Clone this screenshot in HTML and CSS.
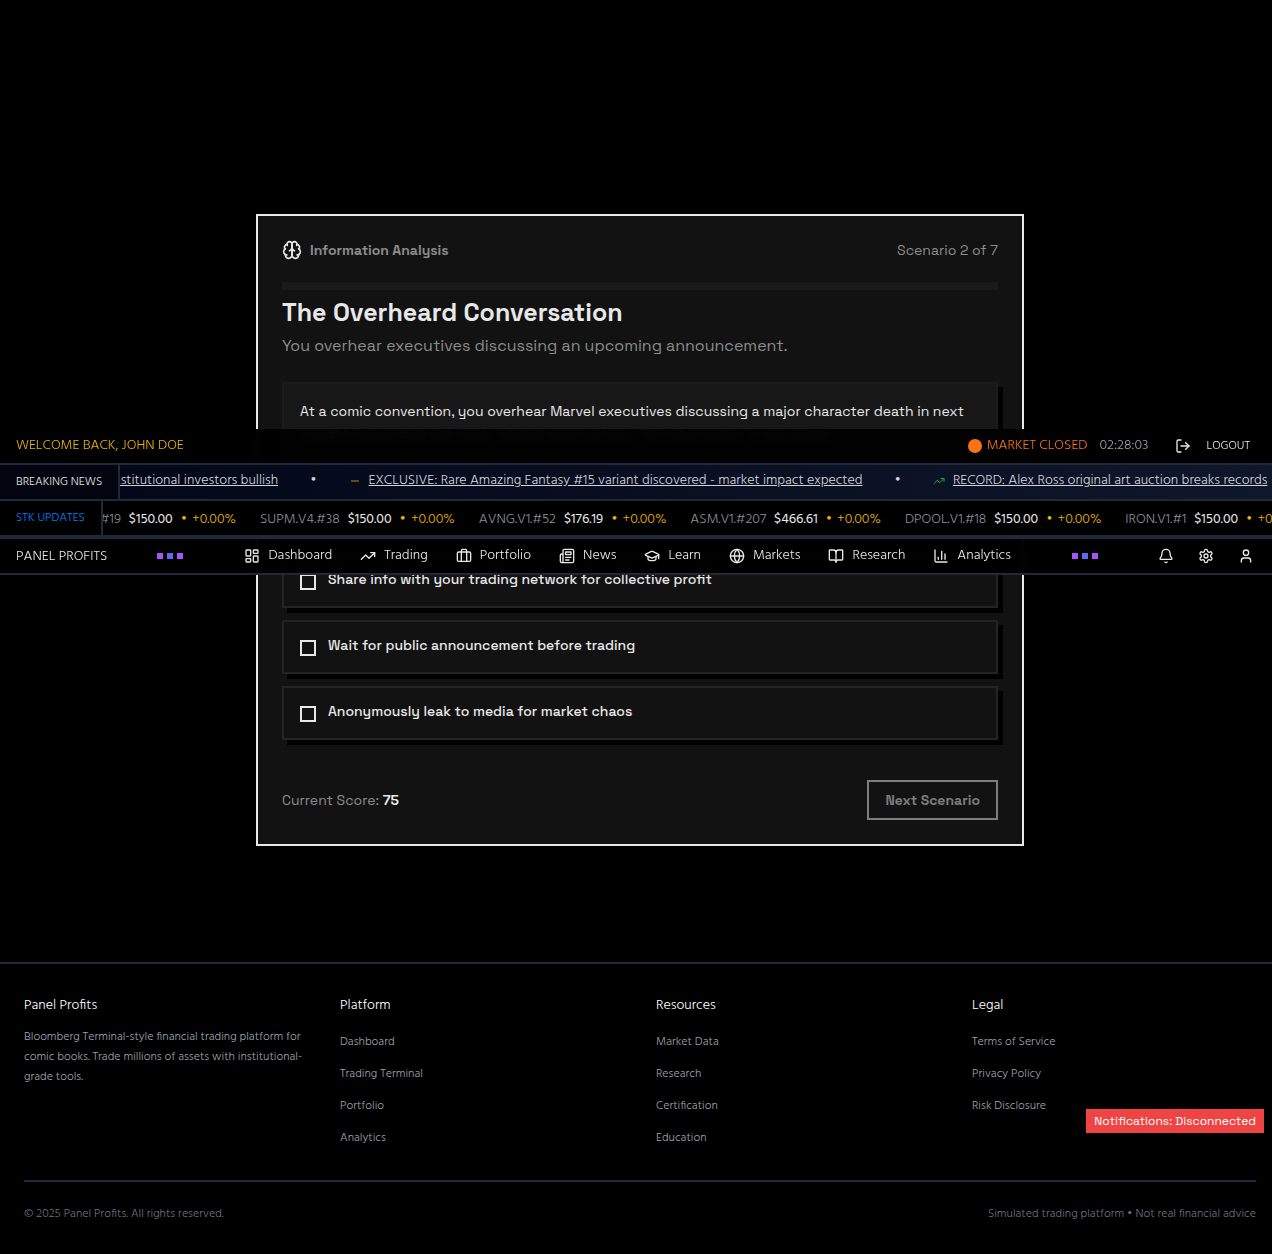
FILE: index.html
```html
<!DOCTYPE html>
<html lang="en">
<head>
<meta charset="utf-8">
<meta name="viewport" content="width=device-width, initial-scale=1">
<title>Panel Profits</title>
<link rel="stylesheet" href="styles.css">
</head>
<body>
<svg class="sprite" aria-hidden="true">
  <symbol id="i-logout" viewBox="0 0 24 24"><path d="M9 21H5a2 2 0 0 1-2-2V5a2 2 0 0 1 2-2h4"/><path d="m16 17 5-5-5-5"/><path d="M21 12H9"/></symbol>
  <symbol id="i-trend" viewBox="0 0 24 24"><path d="m22 7-8.500 8.500-5-5L2 17"/><path d="M16 7h6v6"/></symbol>
  <symbol id="i-minus" viewBox="0 0 24 24"><path d="M5 12h14"/></symbol>
  <symbol id="i-dashboard" viewBox="0 0 24 24"><rect width="7" height="9" x="3" y="3" rx="1"/><rect width="7" height="5" x="14" y="3" rx="1"/><rect width="7" height="9" x="14" y="12" rx="1"/><rect width="7" height="5" x="3" y="16" rx="1"/></symbol>
  <symbol id="i-briefcase" viewBox="0 0 24 24"><rect width="20" height="14" x="2" y="6" rx="2"/><path d="M16 20V4a2 2 0 0 0-2-2h-4a2 2 0 0 0-2 2v16"/></symbol>
  <symbol id="i-news" viewBox="0 0 24 24"><path d="M4 22h16a2 2 0 0 0 2-2V4a2 2 0 0 0-2-2H8a2 2 0 0 0-2 2v16a2 2 0 0 1-2 2Zm0 0a2 2 0 0 1-2-2v-9c0-1.100.9-2 2-2h2"/><path d="M18 14h-8"/><path d="M15 18h-5"/><path d="M10 6h8v4h-8V6Z"/></symbol>
  <symbol id="i-learn" viewBox="0 0 24 24"><path d="M21.420 10.922a1 1 0 0 0-.019-1.838L12.830 5.180a2 2 0 0 0-1.660 0L2.600 9.080a1 1 0 0 0 0 1.832l8.570 3.908a2 2 0 0 0 1.660 0z"/><path d="M22 10v6"/><path d="M6 12.500V16a6 3 0 0 0 12 0v-3.500"/></symbol>
  <symbol id="i-globe" viewBox="0 0 24 24"><circle cx="12" cy="12" r="10"/><path d="M12 2a14.500 14.500 0 0 0 0 20 14.500 14.500 0 0 0 0-20"/><path d="M2 12h20"/></symbol>
  <symbol id="i-book" viewBox="0 0 24 24"><path d="M12 7v14"/><path d="M3 18a1 1 0 0 1-1-1V4a1 1 0 0 1 1-1h5a4 4 0 0 1 4 4 4 4 0 0 1 4-4h5a1 1 0 0 1 1 1v13a1 1 0 0 1-1 1h-6a3 3 0 0 0-3 3 3 3 0 0 0-3-3z"/></symbol>
  <symbol id="i-chart" viewBox="0 0 24 24"><path d="M3 3v16a2 2 0 0 0 2 2h16"/><path d="M18 17V9"/><path d="M13 17V5"/><path d="M8 17v-3"/></symbol>
  <symbol id="i-bell" viewBox="0 0 24 24"><path d="M10.268 21a2 2 0 0 0 3.464 0"/><path d="M3.262 15.326A1 1 0 0 0 4 17h16a1 1 0 0 0 .740-1.673C19.410 13.956 18 12.499 18 8A6 6 0 0 0 6 8c0 4.499-1.411 5.956-2.738 7.326"/></symbol>
  <symbol id="i-gear" viewBox="0 0 24 24"><path d="M12.220 2h-.44a2 2 0 0 0-2 2v.18a2 2 0 0 1-1 1.730l-.43.25a2 2 0 0 1-2 0l-.15-.08a2 2 0 0 0-2.730.73l-.22.38a2 2 0 0 0 .73 2.730l.15.1a2 2 0 0 1 1 1.720v.51a2 2 0 0 1-1 1.740l-.15.09a2 2 0 0 0-.73 2.730l.22.38a2 2 0 0 0 2.730.73l.15-.08a2 2 0 0 1 2 0l.43.25a2 2 0 0 1 1 1.730V20a2 2 0 0 0 2 2h.44a2 2 0 0 0 2-2v-.18a2 2 0 0 1 1-1.730l.43-.25a2 2 0 0 1 2 0l.15.08a2 2 0 0 0 2.730-.73l.22-.39a2 2 0 0 0-.73-2.730l-.15-.08a2 2 0 0 1-1-1.740v-.5a2 2 0 0 1 1-1.740l.15-.09a2 2 0 0 0 .73-2.730l-.22-.38a2 2 0 0 0-2.730-.73l-.15.08a2 2 0 0 1-2 0l-.43-.25a2 2 0 0 1-1-1.730V4a2 2 0 0 0-2-2z"/><circle cx="12" cy="12" r="3"/></symbol>
  <symbol id="i-user" viewBox="0 0 24 24"><path d="M19 21v-2a4 4 0 0 0-4-4H9a4 4 0 0 0-4 4v2"/><circle cx="12" cy="7" r="4"/></symbol>
  <symbol id="i-brain" viewBox="0 0 24 24"><path d="M12 5a3 3 0 1 0-5.997.125 4 4 0 0 0-2.526 5.770 4 4 0 0 0 .556 6.588A4 4 0 1 0 12 18Z"/><path d="M12 5a3 3 0 1 1 5.997.125 4 4 0 0 1 2.526 5.770 4 4 0 0 1-.556 6.588A4 4 0 1 1 12 18Z"/><path d="M15 13a4.500 4.500 0 0 1-3-4 4.500 4.500 0 0 1-3 4"/><path d="M17.599 6.500a3 3 0 0 0 .399-1.375"/><path d="M6.003 5.125A3 3 0 0 0 6.401 6.500"/><path d="M3.477 10.896a4 4 0 0 1 .585-.396"/><path d="M19.938 10.500a4 4 0 0 1 .585.396"/><path d="M6 18a4 4 0 0 1-1.967-.516"/><path d="M19.967 17.484A4 4 0 0 1 18 18"/></symbol>
</svg>

<header class="site-header">
  <div class="topbar">
    <span class="welcome">WELCOME BACK, JOHN DOE</span>
    <div class="status">
      <span class="status-dot"></span>
      <span class="market">MARKET CLOSED</span>
      <time class="clock">02:28:03</time>
      <button class="logout" type="button"><svg class="icon"><use href="#i-logout"/></svg>LOGOUT</button>
    </div>
  </div>

  <div class="ticker news">
    <span class="ticker-label news-label">BREAKING NEWS</span>
    <div class="ticker-view news-view">
      <div class="news-lead"><a href="#">Institutional investors bullish</a></div>
      <span>•</span>
      <div class="news-item"><svg class="icon-small flat"><use href="#i-minus"/></svg><a href="#">EXCLUSIVE: Rare Amazing Fantasy #15 variant discovered - market impact expected</a></div>
      <span>•</span>
      <div class="news-item"><svg class="icon-small up"><use href="#i-trend"/></svg><a href="#">RECORD: Alex Ross original art auction breaks records</a></div>
    </div>
  </div>

  <div class="ticker stocks">
    <span class="ticker-label stocks-label">STK UPDATES</span>
    <div class="ticker-view stocks-view">
      <div class="quote"><span class="symbol symbol-lead">#19</span><b>$150.00</b><span class="change"><i>•</i><em>+0.00%</em></span></div>
      <div class="quote"><span class="symbol">SUPM.V4.#38</span><b>$150.00</b><span class="change"><i>•</i><em>+0.00%</em></span></div>
      <div class="quote"><span class="symbol">AVNG.V1.#52</span><b>$176.19</b><span class="change"><i>•</i><em>+0.00%</em></span></div>
      <div class="quote"><span class="symbol">ASM.V1.#207</span><b>$466.61</b><span class="change"><i>•</i><em>+0.00%</em></span></div>
      <div class="quote"><span class="symbol">DPOOL.V1.#18</span><b>$150.00</b><span class="change"><i>•</i><em>+0.00%</em></span></div>
      <div class="quote"><span class="symbol">IRON.V1.#1</span><b>$150.00</b><span class="change"><i>•</i><em>+0.00%</em></span></div>
    </div>
  </div>

  <div class="navbar">
    <a class="brand" href="#">PANEL PROFITS</a>
    <div class="pixels"><span></span><span></span><span></span></div>
    <nav class="nav">
      <a href="#"><svg class="icon"><use href="#i-dashboard"/></svg>Dashboard</a>
      <a href="#"><svg class="icon"><use href="#i-trend"/></svg>Trading</a>
      <a href="#"><svg class="icon"><use href="#i-briefcase"/></svg>Portfolio</a>
      <a href="#"><svg class="icon"><use href="#i-news"/></svg>News</a>
      <a href="#"><svg class="icon"><use href="#i-learn"/></svg>Learn</a>
      <a href="#"><svg class="icon"><use href="#i-globe"/></svg>Markets</a>
      <a href="#"><svg class="icon"><use href="#i-book"/></svg>Research</a>
      <a href="#"><svg class="icon"><use href="#i-chart"/></svg>Analytics</a>
    </nav>
    <div class="pixels"><span></span><span></span><span></span></div>
    <div class="actions">
      <button type="button" aria-label="Notifications"><svg class="icon"><use href="#i-bell"/></svg></button>
      <button type="button" aria-label="Settings"><svg class="icon"><use href="#i-gear"/></svg></button>
      <button type="button" aria-label="Account"><svg class="icon"><use href="#i-user"/></svg></button>
    </div>
  </div>
</header>

<main class="main">
  <form class="card">
    <div class="card-head">
      <svg class="icon-large"><use href="#i-brain"/></svg>
      <span class="category">Information Analysis</span>
      <span class="step">Scenario 2 of 7</span>
    </div>
    <div class="progress"></div>
    <h1 class="title">The Overheard Conversation</h1>
    <p class="subtitle">You overhear executives discussing an upcoming announcement.</p>
    <p class="context">At a comic convention, you overhear Marvel executives discussing a major character death in next month's issue that will crash related asset prices. This information is not public.</p>
    <div class="options">
      <label class="option"><input type="radio" name="choice">Trade on the information immediately</label>
      <label class="option"><input type="radio" name="choice">Share info with your trading network for collective profit</label>
      <label class="option"><input type="radio" name="choice">Wait for public announcement before trading</label>
      <label class="option"><input type="radio" name="choice">Anonymously leak to media for market chaos</label>
    </div>
    <div class="card-foot">
      <span class="score">Current Score: <strong>75</strong></span>
      <button class="next" type="button" disabled>Next Scenario</button>
    </div>
  </form>
</main>

<footer class="footer">
  <div class="footer-columns">
    <section>
      <h2>Panel Profits</h2>
      <p class="about">Bloomberg Terminal-style financial trading platform for comic books. Trade millions of assets with institutional-grade tools.</p>
    </section>
    <section>
      <h2>Platform</h2>
      <ul><li><a href="#">Dashboard</a></li><li><a href="#">Trading Terminal</a></li><li><a href="#">Portfolio</a></li><li><a href="#">Analytics</a></li></ul>
    </section>
    <section>
      <h2>Resources</h2>
      <ul><li><a href="#">Market Data</a></li><li><a href="#">Research</a></li><li><a href="#">Certification</a></li><li><a href="#">Education</a></li></ul>
    </section>
    <section>
      <h2>Legal</h2>
      <ul><li><a href="#">Terms of Service</a></li><li><a href="#">Privacy Policy</a></li><li><a href="#">Risk Disclosure</a></li></ul>
    </section>
  </div>
  <div class="footer-base">
    <span>© 2025 Panel Profits. All rights reserved.</span>
    <span>Simulated trading platform • Not real financial advice</span>
  </div>
  <div class="toast" role="status">Notifications: Disconnected</div>
</footer>
</body>
</html>
```
FILE: styles.css
```css
:root {
  --line: #1f2937;
  --light: #e8e8e8;
  --muted: #8c8c8c;
  --ui: "Hind", "Open Sans", sans-serif;
  --display: "Space Grotesk", "Inter", sans-serif;
}

* { box-sizing: border-box; margin: 0; padding: 0; }

body {
  position: relative;
  background: #000;
  color: var(--light);
  font: 300 14px/20px var(--ui);
}

a { color: inherit; text-decoration: none; }
ul { list-style: none; }
button { font: inherit; color: inherit; background: none; border: 0; }

.sprite { display: none; }

.icon, .icon-small, .icon-large {
  flex: none;
  width: 16px;
  height: 16px;
  fill: none;
  stroke: currentColor;
  stroke-width: 2;
  stroke-linecap: round;
  stroke-linejoin: round;
}
.icon-small { width: 12px; height: 12px; }
.icon-large { width: 20px; height: 20px; }

/* Header stack, floating over the page */
.site-header {
  position: absolute;
  top: 429px;
  left: 0;
  right: 0;
  z-index: 10;
}

.topbar, .navbar {
  display: flex;
  align-items: center;
  height: 36px;
  padding: 0 16px;
  border-bottom: 2px solid var(--line);
  background: rgba(0, 0, 0, .95);
  backdrop-filter: blur(4px);
}

.topbar { justify-content: space-between; }
.welcome { color: #eab308; }
.status { display: flex; align-items: center; }
.status-dot { width: 14px; height: 14px; margin-right: 5px; border-radius: 50%; background: #f97316; }
.market { margin-right: 12px; color: #f97316; }
.clock { color: #9ca3af; }
.logout {
  display: flex;
  align-items: center;
  gap: 16px;
  margin-left: 26px;
  padding-right: 6px;
  font-size: 12px;
}

.ticker {
  display: flex;
  height: 36px;
  border-bottom: 2px solid var(--line);
  white-space: nowrap;
}
.ticker-label {
  flex: none;
  padding: 0 16px;
  border-right: 2px solid var(--line);
  font-size: 12px;
  line-height: 34px;
}
.ticker-view {
  display: flex;
  flex: 1;
  align-items: center;
  min-width: 0;
  overflow: hidden;
}

.news { background: linear-gradient(90deg, #020617, #0f172a); }
.news-label { background: #020510; }
.news-view { gap: 32px; padding-bottom: 2px; color: #d1d5db; }
.news-view a { text-decoration: underline; }
.news-lead {
  display: flex;
  flex: none;
  justify-content: flex-end;
  width: 158px;
  overflow: hidden;
}
.news-item { display: flex; flex: none; align-items: center; gap: 8px; }
.flat { color: #b98e09; }
.up { color: #16a34a; }

.stocks { height: 38px; border-bottom-width: 4px; background: #000; }
.stocks-label { color: #0080ff; }
.stocks-view { gap: 24px; padding-top: 4px; }
.quote { display: flex; flex: none; gap: 8px; }
.quote b { font-weight: 400; }
.change { display: flex; gap: 5px; color: #eab308; }
.change i, .change em { font-style: normal; }
.symbol { color: #8b909a; }
.symbol-lead {
  display: flex;
  justify-content: flex-end;
  width: 18px;
  overflow: hidden;
}

.navbar { justify-content: space-between; }
.brand { margin-top: 2px; }
.pixels { display: flex; gap: 4px; }
.pixels span { width: 6px; height: 6px; background: #a855f7; }
.pixels span:nth-child(2) { background: #6366f1; }
.nav { display: flex; gap: 28px; padding: 0 11px; }
.nav a { display: flex; align-items: center; gap: 8px; }
.actions { display: flex; gap: 24px; padding: 0 2px 0 10px; }
.actions button { display: flex; }

/* Scenario card */
.main { padding: 214px 0 116px 8px; }
.card {
  max-width: 768px;
  margin: 0 auto;
  padding: 24px;
  border: 2px solid var(--light);
  background: #121212;
  font-family: var(--display);
  font-weight: 400;
}
.card-head { display: flex; align-items: center; gap: 8px; color: var(--muted); }
.card-head .icon-large { color: var(--light); }
.category { font-weight: 600; }
.step { margin-left: auto; }
.progress { height: 8px; margin-top: 22px; background: #1a1a1a; }
.title { margin-top: 6px; font-size: 25px; font-weight: 700; line-height: 32px; }
.subtitle { margin-top: 6px; color: var(--muted); font-size: 16px; line-height: 24px; }
.context {
  margin-top: 24px;
  padding: 16px;
  border: 2px solid #1b1b1b;
  background: #171717;
  box-shadow: 5px 5px 0 #000;
  line-height: 23px;
}
.options { display: grid; gap: 12px; margin-top: 24px; }
.option {
  display: flex;
  gap: 12px;
  padding: 13px 16px 16px;
  border: 2px solid #242424;
  background: #121212;
  box-shadow: 5px 5px 0 #000;
  font-weight: 500;
}
.option input {
  appearance: none;
  width: 16px;
  height: 16px;
  margin-top: 5px;
  border: 2px solid var(--light);
}
.card-foot { display: flex; align-items: center; justify-content: space-between; margin-top: 40px; }
.score { color: var(--muted); }
.score strong { color: var(--light); font-weight: 700; }
.next {
  padding: 8px 16px;
  border: 2px solid #7d7d7d;
  color: #7d7d7d;
  font-weight: 700;
}

/* Footer */
.footer {
  position: relative;
  padding: 32px 16px 30px 24px;
  border-top: 2px solid var(--line);
  color: #9ca3af;
  font-size: 12px;
}
.footer-columns { display: grid; grid-template-columns: repeat(4, 1fr); gap: 32px; }
.footer h2 { color: #fff; font-size: 14px; font-weight: 300; line-height: 20px; }
.about { margin-top: 11px; line-height: 20px; }
.footer ul { display: grid; gap: 12px; margin-top: 16px; }
.footer-base {
  display: flex;
  justify-content: space-between;
  margin-top: 32px;
  padding-top: 22px;
  border-top: 2px solid var(--line);
  color: #6b7280;
}
.toast {
  position: absolute;
  right: 8px;
  bottom: 121px;
  padding: 4px 8px;
  background: #ef4444;
  color: #fff;
  font: 400 12px/16px var(--display);
}
```
